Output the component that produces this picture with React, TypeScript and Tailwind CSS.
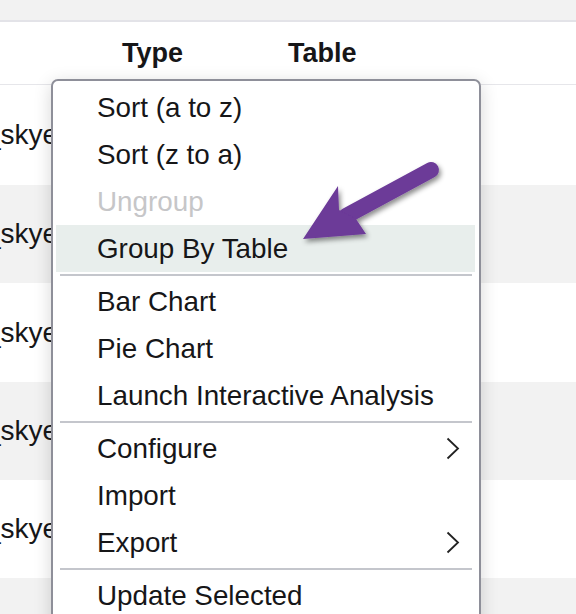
import React from 'react';

type MenuEntry =
  | { kind: 'item'; label: string; disabled?: boolean; active?: boolean; submenu?: boolean }
  | { kind: 'sep' };

const menu: MenuEntry[] = [
  { kind: 'item', label: 'Sort (a to z)' },
  { kind: 'item', label: 'Sort (z to a)' },
  { kind: 'item', label: 'Ungroup', disabled: true },
  { kind: 'item', label: 'Group By Table', active: true },
  { kind: 'sep' },
  { kind: 'item', label: 'Bar Chart' },
  { kind: 'item', label: 'Pie Chart' },
  { kind: 'item', label: 'Launch Interactive Analysis' },
  { kind: 'sep' },
  { kind: 'item', label: 'Configure', submenu: true },
  { kind: 'item', label: 'Import' },
  { kind: 'item', label: 'Export', submenu: true },
  { kind: 'sep' },
  { kind: 'item', label: 'Update Selected' },
];

const rows = [
  { h: 'h-[100px]', bg: 'bg-white' },
  { h: 'h-[98px]', bg: 'bg-[#f2f2f2]' },
  { h: 'h-[99px]', bg: 'bg-white' },
  { h: 'h-[98px]', bg: 'bg-[#f2f2f2]' },
  { h: 'h-[98px]', bg: 'bg-white' },
  { h: 'h-[98px]', bg: 'bg-[#f2f2f2]' },
];

function Chevron() {
  return (
    <svg width="14" height="23" viewBox="0 0 14 23" fill="none">
      <path d="M1.5 1.5 L12 11.5 L1.5 21.5" stroke="#222" strokeWidth="1.8" strokeLinejoin="miter" />
    </svg>
  );
}

export default function App() {
  return (
    <div className="relative w-[576px] h-[614px] overflow-hidden bg-white font-['Liberation_Sans',Arial,sans-serif] text-[#161618]">
      <div className="h-[22px] bg-[#f2f2f2] border-b-2 border-[#e3e3e8]" />
      <div className="h-[63px] flex items-center border-b border-[#e6e6ea] text-[27px] font-bold">
        <span className="ml-[122px]">Type</span>
        <span className="ml-[105px]">Table</span>
      </div>

      {rows.map((r, i) => (
        <div key={i} className={`${r.h} ${r.bg} flex items-center overflow-hidden text-[28px]`}>
          {i < 5 && <span className="ml-[-15px] whitespace-nowrap">_skyeline</span>}
        </div>
      ))}

      <div className="absolute left-[51px] top-[79px] w-[430px] h-[560px] bg-white border-2 border-[#8e8f99] rounded-[7px] shadow-[0_4px_18px_rgba(0,0,0,0.16)] pt-[3px] text-[27.8px]">
        {menu.map((m, i) =>
          m.kind === 'sep' ? (
            <div key={i} className="h-[6px] flex items-center px-[7px]">
              <div className="h-[2px] w-full bg-[#c4c6cc]" />
            </div>
          ) : (
            <div
              key={i}
              className={`h-[47px] ml-[3px] mr-[4px] pl-[41px] pr-[15px] flex items-center justify-between whitespace-nowrap ${
                m.active ? 'bg-[#e8eeec]' : ''
              } ${m.disabled ? 'text-[#c6c6c8]' : 'text-[#161618]'}`}
            >
              <span>{m.label}</span>
              {m.submenu && <Chevron />}
            </div>
          )
        )}
      </div>

      <svg className="absolute inset-0 pointer-events-none" width="576" height="614" viewBox="0 0 576 614">
        <defs>
          <filter id="sh" x="-20%" y="-20%" width="140%" height="140%">
            <feDropShadow dx="2" dy="3" stdDeviation="2.5" floodColor="#000" floodOpacity="0.45" />
          </filter>
        </defs>
        <g filter="url(#sh)" fill="#6c3a98">
          <line x1="431" y1="170" x2="346" y2="216" stroke="#6c3a98" strokeWidth="16" strokeLinecap="round" />
          <polygon points="303,239 338,186 339,210 356,219 366,234" />
        </g>
      </svg>
    </div>
  );
}
